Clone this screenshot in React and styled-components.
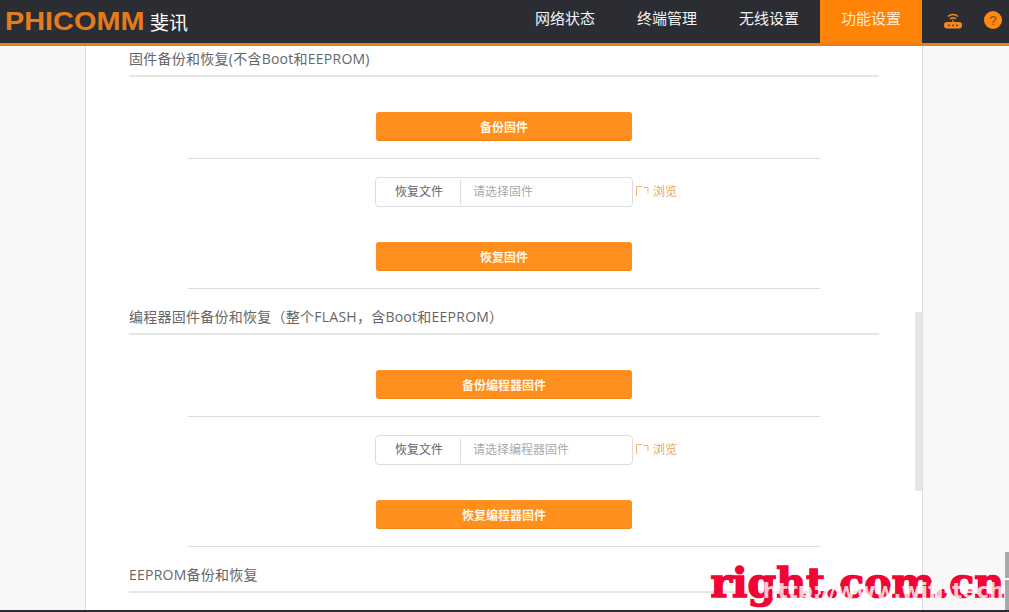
import React from "react";
import styled, { createGlobalStyle } from "styled-components";

const GlobalStyle = createGlobalStyle`
  html, body {
    margin: 0;
    padding: 0;
    overflow: hidden;
    background: #f8f8f8;
  }
  * {
    box-sizing: border-box;
  }
`;

const Page = styled.div`
  display: flex;
  flex-direction: column;
  font-family: "Noto Sans CJK SC", "Open Sans", sans-serif;
  height: 612px;
  overflow: hidden;
  position: relative;
  width: 1009px;
`;

const Header = styled.header`
  align-items: stretch;
  background: #2b2d33;
  border-bottom: 3px solid #e67f22;
  display: flex;
  flex: none;
  height: 46px;
`;

const Logo = styled.div`
  align-items: center;
  display: flex;
  padding: 0 0 1px 5px;
`;

const LogoMark = styled.span`
  color: #e57c1c;
  font-family: "Liberation Sans", sans-serif;
  font-size: 26px;
  font-weight: 700;
  line-height: 1;
  transform: scaleX(1.11);
  transform-origin: left center;
  width: 145px;
`;

const LogoName = styled.span`
  color: #ffffff;
  font-size: 19px;
  line-height: 1;
`;

const Nav = styled.nav`
  display: flex;
  margin-left: auto;
`;

const Tab = styled.a`
  align-items: center;
  background: ${(props) => (props.$active ? "#ff8307" : "transparent")};
  color: ${(props) => (props.$active ? "#ffe9cf" : "#f2f2f2")};
  display: flex;
  font-size: 15px;
  justify-content: center;
  padding-bottom: 8px;
  width: 102px;
`;

const Tools = styled.div`
  align-items: center;
  display: flex;
  gap: 21px;
  justify-content: flex-end;
  padding: 0 7px 3px 0;
  width: 87px;
`;

const Help = styled.span`
  align-items: center;
  background: #ff8a12;
  border-radius: 50%;
  color: #7a4a16;
  display: flex;
  font-family: "Liberation Sans", sans-serif;
  font-size: 13px;
  height: 18px;
  justify-content: center;
  width: 18px;
`;

const Main = styled.main`
  display: flex;
  flex: 1;
  min-height: 0;
`;

const Panel = styled.div`
  background: #ffffff;
  border-left: 1px solid #dcdcdc;
  border-right: 1px solid #dcdcdc;
  margin-left: 85px;
  overflow: hidden;
  padding: 0 43px;
  position: relative;
  width: 838px;
`;

const Thumb = styled.div`
  background: #e6e6e6;
  border-radius: 2px 0 0 2px;
  height: 179px;
  position: absolute;
  right: 0;
  top: 266px;
  width: 7px;
`;

const Title = styled.h2`
  border-bottom: 2px solid #e6e6e6;
  color: #666666;
  font-family: "Open Sans", "Noto Sans CJK SC", sans-serif;
  font-size: 14px;
  font-weight: 400;
  height: 31px;
  letter-spacing: 0.25px;
  line-height: 25px;
  margin: 0;
`;

const Body = styled.div`
  margin: 0 59px;
  padding-bottom: 15px;
`;

const Row = styled.div`
  align-items: center;
  border-bottom: ${(props) => (props.$ruled ? "1px solid #dddddd" : "none")};
  display: flex;
  justify-content: center;
  padding: ${(props) => props.$pad};
`;

const Button = styled.button`
  background: #ff8f1c;
  border: 0;
  border-bottom: 1px solid #ee8515;
  border-radius: 3px;
  color: #fff6ea;
  font-family: inherit;
  font-size: 12px;
  font-weight: 700;
  height: 29px;
  padding: 0;
  width: 256px;
`;

const FileRow = styled.div`
  align-items: center;
  display: flex;
  margin-left: 45px;
  width: 303px;
`;

const FileBox = styled.div`
  align-items: center;
  border: 1px solid #dcdcdc;
  border-radius: 4px;
  display: flex;
  height: 30px;
  width: 258px;
`;

const FileLabel = styled.span`
  border-right: 1px solid #dddddd;
  color: #666666;
  font-size: 12px;
  height: 25px;
  line-height: 22px;
  padding-left: 2px;
  text-align: center;
  width: 85px;
`;

const FilePlaceholder = styled.span`
  color: #aaaaaa;
  font-size: 12px;
  padding: 0 0 3px 12px;
`;

const Browse = styled.a`
  align-items: center;
  color: #e9a656;
  display: flex;
  font-size: 12px;
  gap: 4px;
  margin-left: 2px;
  padding-bottom: 3px;
`;

const Footer = styled.div`
  background: #2b2d33;
  flex: none;
  height: 2px;
`;

const PageThumb = styled.div`
  background: #a8a8a8;
  height: ${(props) => props.$height}px;
  position: absolute;
  right: 0;
  top: ${(props) => props.$top}px;
  width: 4px;
`;

const Watermark = styled.div`
  color: #f00535;
  font-family: "DejaVu Serif", serif;
  font-size: 41px;
  font-weight: 900;
  -webkit-text-stroke: 1.6px #f00535;
  line-height: 42px;
  position: absolute;
  right: 5px;
  top: 562px;
  white-space: nowrap;
`;

const WatermarkLink = styled.div`
  color: rgba(255, 255, 255, 0.8);
  font-family: "DejaVu Sans", sans-serif;
  font-size: 21px;
  font-weight: 700;
  line-height: 24px;
  position: absolute;
  right: 5px;
  top: 579px;
  white-space: nowrap;
`;

const RouterIcon = () => (
  <svg width="20" height="18" viewBox="0 0 20 18" fill="none">
    <path d="M5 5.5C7.5 2.8 12.5 2.8 15 5.5" stroke="#f08a24" strokeWidth="1.4" />
    <path d="M7 8C8.5 6.4 11.5 6.4 13 8" stroke="#f08a24" strokeWidth="1.4" />
    <path d="M9.4 8.5h1.2V12H9.4z" fill="#f08a24" />
    <rect x="1" y="11" width="18" height="6.5" rx="3" fill="#f08a24" />
    <circle cx="6" cy="14.3" r="0.9" fill="#2b2d33" />
    <circle cx="10" cy="14.3" r="0.9" fill="#2b2d33" />
    <circle cx="14" cy="14.3" r="0.9" fill="#2b2d33" />
  </svg>
);

const FolderIcon = () => (
  <svg width="14" height="12" viewBox="0 0 14 12" fill="none">
    <path d="M1.5 11V1.5H7M8.5 2.5H13V8" stroke="#eab47a" strokeWidth="1" />
  </svg>
);

const Section = ({ title, backup, placeholder, restore }) => (
  <section>
    <Title>{title}</Title>
    <Body>
      <Row $ruled $pad="35px 0 17px">
        <Button>{backup}</Button>
      </Row>
      <Row $pad="18px 0 0">
        <FileRow>
          <FileBox>
            <FileLabel>恢复文件</FileLabel>
            <FilePlaceholder>{placeholder}</FilePlaceholder>
          </FileBox>
          <Browse>
            <FolderIcon />
            浏览
          </Browse>
        </FileRow>
      </Row>
      <Row $ruled $pad="35px 0 17px">
        <Button>{restore}</Button>
      </Row>
    </Body>
  </section>
);

const App = () => (
  <Page>
    <GlobalStyle />
    <Header>
      <Logo>
        <LogoMark>PHICOMM</LogoMark>
        <LogoName>斐讯</LogoName>
      </Logo>
      <Nav>
        <Tab>网络状态</Tab>
        <Tab>终端管理</Tab>
        <Tab>无线设置</Tab>
        <Tab $active>功能设置</Tab>
      </Nav>
      <Tools>
        <RouterIcon />
        <Help>?</Help>
      </Tools>
    </Header>
    <Main>
      <Panel>
        <Section
          title="固件备份和恢复(不含Boot和EEPROM)"
          backup="备份固件"
          placeholder="请选择固件"
          restore="恢复固件"
        />
        <Section
          title="编程器固件备份和恢复（整个FLASH，含Boot和EEPROM）"
          backup="备份编程器固件"
          placeholder="请选择编程器固件"
          restore="恢复编程器固件"
        />
        <Title>EEPROM备份和恢复</Title>
        <Thumb />
      </Panel>
    </Main>
    <Footer />
    <PageThumb $top={552} $height={26} />
    <PageThumb $top={580} $height={30} />
    <Watermark>right.com.cn</Watermark>
    <WatermarkLink>http://www.wifi-tech</WatermarkLink>
  </Page>
);

export default App;
